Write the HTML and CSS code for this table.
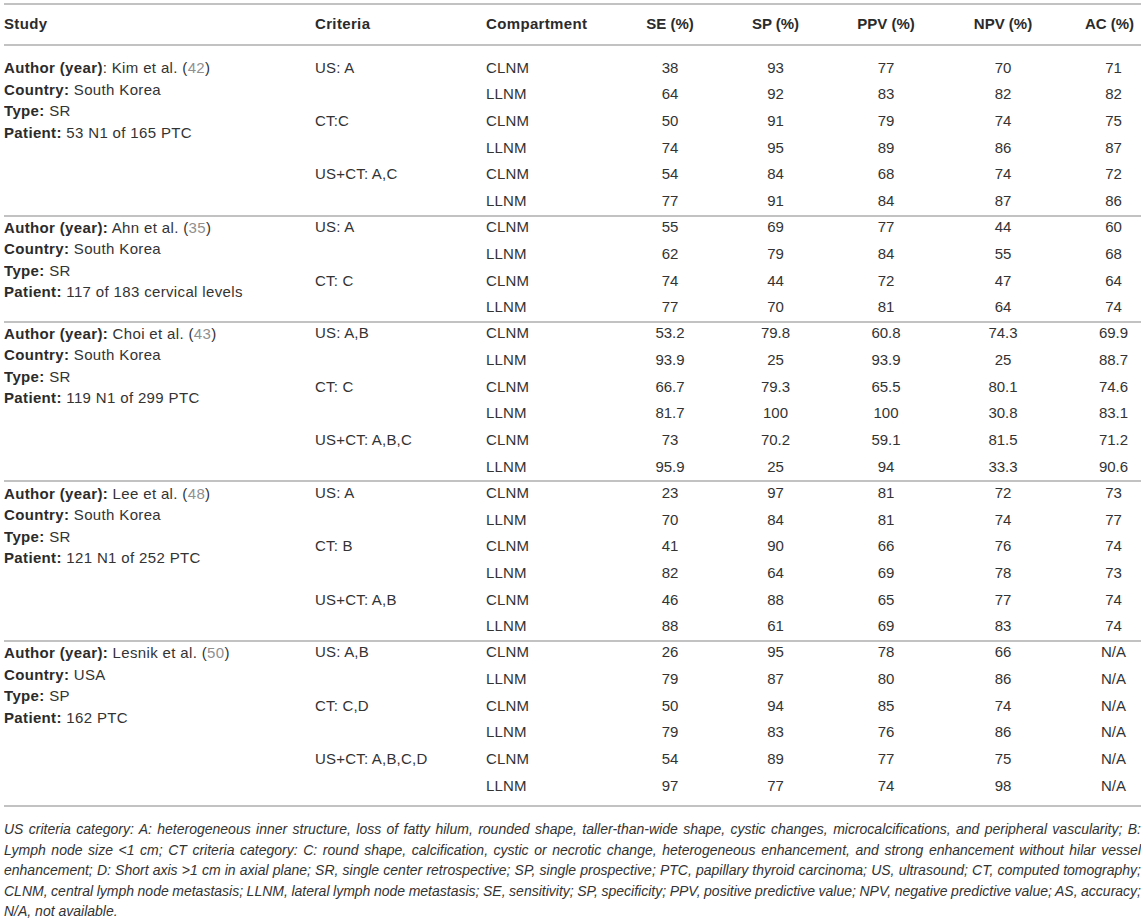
FILE: index.html
```html
<!DOCTYPE html>
<html lang="en">
<head>
<meta charset="utf-8">
<title>Diagnostic performance of US and CT</title>
<link rel="stylesheet" href="styles.css">
</head>
<body>
<table class="results">
  <colgroup>
    <col class="c-study"><col class="c-crit"><col class="c-comp">
    <col class="c-se"><col class="c-sp"><col class="c-ppv"><col class="c-npv"><col class="c-ac">
  </colgroup>
  <thead>
    <tr>
      <th>Study</th><th>Criteria</th><th>Compartment</th>
      <th class="num">SE (%)</th><th class="num">SP (%)</th><th class="num">PPV (%)</th><th class="num">NPV (%)</th><th class="num ac">AC (%)</th>
    </tr>
  </thead>
  <tbody>
    <tr class="first">
      <td class="study" rowspan="6"><b>Author (year)</b>: Kim et al. (<span class="ref">42</span>)<br><b>Country:</b> South Korea<br><b>Type:</b> SR<br><b>Patient:</b> 53 N1 of 165 PTC</td>
      <td rowspan="2">US: A</td><td>CLNM</td><td class="num">38</td><td class="num">93</td><td class="num">77</td><td class="num">70</td><td class="num ac">71</td>
    </tr>
    <tr><td>LLNM</td><td class="num">64</td><td class="num">92</td><td class="num">83</td><td class="num">82</td><td class="num ac">82</td></tr>
    <tr><td rowspan="2">CT:C</td><td>CLNM</td><td class="num">50</td><td class="num">91</td><td class="num">79</td><td class="num">74</td><td class="num ac">75</td></tr>
    <tr><td>LLNM</td><td class="num">74</td><td class="num">95</td><td class="num">89</td><td class="num">86</td><td class="num ac">87</td></tr>
    <tr><td rowspan="2">US+CT: A,C</td><td>CLNM</td><td class="num">54</td><td class="num">84</td><td class="num">68</td><td class="num">74</td><td class="num ac">72</td></tr>
    <tr><td>LLNM</td><td class="num">77</td><td class="num">91</td><td class="num">84</td><td class="num">87</td><td class="num ac">86</td></tr>
  </tbody>
  <tbody>
    <tr>
      <td class="study" rowspan="4"><b>Author (year):</b> Ahn et al. (<span class="ref">35</span>)<br><b>Country:</b> South Korea<br><b>Type:</b> SR<br><b>Patient:</b> 117 of 183 cervical levels</td>
      <td rowspan="2">US: A</td><td>CLNM</td><td class="num">55</td><td class="num">69</td><td class="num">77</td><td class="num">44</td><td class="num ac">60</td>
    </tr>
    <tr><td>LLNM</td><td class="num">62</td><td class="num">79</td><td class="num">84</td><td class="num">55</td><td class="num ac">68</td></tr>
    <tr><td rowspan="2">CT: C</td><td>CLNM</td><td class="num">74</td><td class="num">44</td><td class="num">72</td><td class="num">47</td><td class="num ac">64</td></tr>
    <tr><td>LLNM</td><td class="num">77</td><td class="num">70</td><td class="num">81</td><td class="num">64</td><td class="num ac">74</td></tr>
  </tbody>
  <tbody>
    <tr>
      <td class="study" rowspan="6"><b>Author (year):</b> Choi et al. (<span class="ref">43</span>)<br><b>Country:</b> South Korea<br><b>Type:</b> SR<br><b>Patient:</b> 119 N1 of 299 PTC</td>
      <td rowspan="2">US: A,B</td><td>CLNM</td><td class="num">53.2</td><td class="num">79.8</td><td class="num">60.8</td><td class="num">74.3</td><td class="num ac">69.9</td>
    </tr>
    <tr><td>LLNM</td><td class="num">93.9</td><td class="num">25</td><td class="num">93.9</td><td class="num">25</td><td class="num ac">88.7</td></tr>
    <tr><td rowspan="2">CT: C</td><td>CLNM</td><td class="num">66.7</td><td class="num">79.3</td><td class="num">65.5</td><td class="num">80.1</td><td class="num ac">74.6</td></tr>
    <tr><td>LLNM</td><td class="num">81.7</td><td class="num">100</td><td class="num">100</td><td class="num">30.8</td><td class="num ac">83.1</td></tr>
    <tr><td rowspan="2">US+CT: A,B,C</td><td>CLNM</td><td class="num">73</td><td class="num">70.2</td><td class="num">59.1</td><td class="num">81.5</td><td class="num ac">71.2</td></tr>
    <tr><td>LLNM</td><td class="num">95.9</td><td class="num">25</td><td class="num">94</td><td class="num">33.3</td><td class="num ac">90.6</td></tr>
  </tbody>
  <tbody>
    <tr>
      <td class="study" rowspan="6"><b>Author (year):</b> Lee et al. (<span class="ref">48</span>)<br><b>Country:</b> South Korea<br><b>Type:</b> SR<br><b>Patient:</b> 121 N1 of 252 PTC</td>
      <td rowspan="2">US: A</td><td>CLNM</td><td class="num">23</td><td class="num">97</td><td class="num">81</td><td class="num">72</td><td class="num ac">73</td>
    </tr>
    <tr><td>LLNM</td><td class="num">70</td><td class="num">84</td><td class="num">81</td><td class="num">74</td><td class="num ac">77</td></tr>
    <tr><td rowspan="2">CT: B</td><td>CLNM</td><td class="num">41</td><td class="num">90</td><td class="num">66</td><td class="num">76</td><td class="num ac">74</td></tr>
    <tr><td>LLNM</td><td class="num">82</td><td class="num">64</td><td class="num">69</td><td class="num">78</td><td class="num ac">73</td></tr>
    <tr><td rowspan="2">US+CT: A,B</td><td>CLNM</td><td class="num">46</td><td class="num">88</td><td class="num">65</td><td class="num">77</td><td class="num ac">74</td></tr>
    <tr><td>LLNM</td><td class="num">88</td><td class="num">61</td><td class="num">69</td><td class="num">83</td><td class="num ac">74</td></tr>
  </tbody>
  <tbody>
    <tr>
      <td class="study" rowspan="6"><b>Author (year):</b> Lesnik et al. (<span class="ref">50</span>)<br><b>Country:</b> USA<br><b>Type:</b> SP<br><b>Patient:</b> 162 PTC</td>
      <td rowspan="2">US: A,B</td><td>CLNM</td><td class="num">26</td><td class="num">95</td><td class="num">78</td><td class="num">66</td><td class="num ac">N/A</td>
    </tr>
    <tr><td>LLNM</td><td class="num">79</td><td class="num">87</td><td class="num">80</td><td class="num">86</td><td class="num ac">N/A</td></tr>
    <tr><td rowspan="2">CT: C,D</td><td>CLNM</td><td class="num">50</td><td class="num">94</td><td class="num">85</td><td class="num">74</td><td class="num ac">N/A</td></tr>
    <tr><td>LLNM</td><td class="num">79</td><td class="num">83</td><td class="num">76</td><td class="num">86</td><td class="num ac">N/A</td></tr>
    <tr><td rowspan="2">US+CT: A,B,C,D</td><td>CLNM</td><td class="num">54</td><td class="num">89</td><td class="num">77</td><td class="num">75</td><td class="num ac">N/A</td></tr>
    <tr class="last"><td>LLNM</td><td class="num">97</td><td class="num">77</td><td class="num">74</td><td class="num">98</td><td class="num ac">N/A</td></tr>
  </tbody>
</table>
<p class="notes">
  <span class="line">US criteria category: A: heterogeneous inner structure, loss of fatty hilum, rounded shape, taller-than-wide shape, cystic changes, microcalcifications, and peripheral vascularity; B:</span>
  <span class="line">Lymph node size &lt;1 cm; CT criteria category: C: round shape, calcification, cystic or necrotic change, heterogeneous enhancement, and strong enhancement without hilar vessel</span>
  <span class="line">enhancement; D: Short axis &gt;1 cm in axial plane; SR, single center retrospective; SP, single prospective; PTC, papillary thyroid carcinoma; US, ultrasound; CT, computed tomography;</span>
  <span class="line">CLNM, central lymph node metastasis; LLNM, lateral lymph node metastasis; SE, sensitivity; SP, specificity; PPV, positive predictive value; NPV, negative predictive value; AS, accuracy;</span>
  <span class="line end">N/A, not available.</span>
</p>
</body>
</html>
```

FILE: styles.css
```css
body {
  margin: 3px 4px 0;
  background: #ffffff;
  color: #333333;
  font-family: "Liberation Sans", Arial, Helvetica, sans-serif;
}

.results {
  border-collapse: collapse;
  table-layout: fixed;
  width: 1137px;
  font-size: 15px;
}

.c-study { width: 311px; }
.c-crit { width: 171px; }
.c-comp { width: 131px; }
.c-se { width: 106px; }
.c-sp { width: 105px; }
.c-ppv { width: 116px; }
.c-npv { width: 118px; }
.c-ac { width: 79px; }

.results th {
  border-top: 2px solid #c2c2c2;
  border-bottom: 2px solid #c2c2c2;
  padding: 10px 0 10px;
  line-height: 18.67px;
  font-weight: bold;
  letter-spacing: 0.35px;
  text-align: left;
  color: #2b2b2b;
}

.results td {
  padding: 4px 0;
  line-height: 18.67px;
  vertical-align: top;
  text-align: left;
  letter-spacing: 0.2px;
}

.results .num { text-align: center; letter-spacing: 0; }
.results td.ac { padding-left: 24px; }
.results th.ac { padding-left: 16px; }

.results td.study {
  line-height: 21.5px;
  padding-top: 2.6px;
  letter-spacing: 0.35px;
}

.results b { font-weight: bold; color: #2b2b2b; }

.results tr.first td { padding-top: 13px; }
.results tr.first td.study { padding-top: 11.6px; }

.results tbody + tbody { border-top: 2px solid #c2c2c2; }
.results tbody + tbody tr:first-child td { padding-top: 1.5px; }
.results tbody + tbody tr:first-child td.study { padding-top: 0.1px; }

.results tr.last td { padding-bottom: 10px; }
.results tbody:last-child { border-bottom: 2px solid #c2c2c2; }

.ref { color: #8f8f8f; }

.notes {
  margin: 0;
  padding-top: 12px;
  width: 1137px;
  font-size: 14px;
  font-style: italic;
  line-height: 20.5px;
  color: #333333;
}

.notes .line {
  display: block;
  text-align: justify;
  text-align-last: justify;
  white-space: nowrap;
  word-spacing: -1.5px;
}

.notes .line.end {
  text-align-last: left;
  word-spacing: normal;
}
```
